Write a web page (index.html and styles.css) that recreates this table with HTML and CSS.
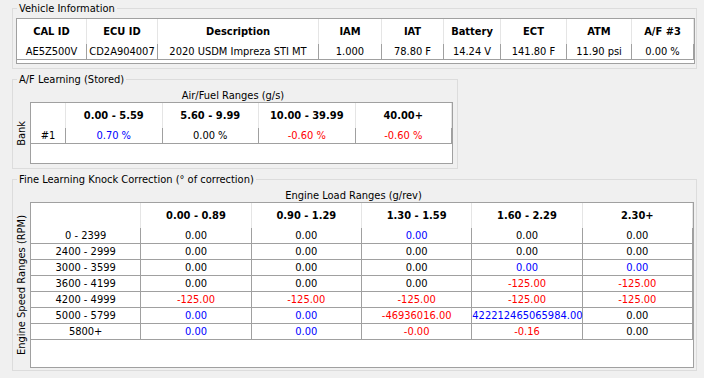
FILE: index.html
```html
<!DOCTYPE html>
<html lang="en">
<head>
    <meta charset="UTF-8">
    <title>ECU Learning Viewer</title>
    <link rel="stylesheet" href="styles.css">
</head>
<body>

<!-- Vehicle info -->
<fieldset class="group group-wide">
    <legend>Vehicle Information</legend>
    <div class="grid grid-vehicle">
        <table>
            <colgroup>
                <col class="w70"><col class="w71"><col class="w161"><col class="w63"><col class="w62">
                <col class="w57"><col class="w66"><col class="w65"><col class="w62">
            </colgroup>
            <thead>
                <tr>
                    <th>CAL ID</th><th>ECU ID</th><th>Description</th><th>IAM</th><th>IAT</th>
                    <th>Battery</th><th>ECT</th><th>ATM</th><th>A/F #3</th>
                </tr>
            </thead>
            <tbody>
                <tr>
                    <td>AE5Z500V</td><td>CD2A904007</td><td>2020 USDM Impreza STI MT</td><td>1.000</td><td>78.80 F</td>
                    <td>14.24 V</td><td>141.80 F</td><td>11.90 psi</td><td>0.00 %</td>
                </tr>
            </tbody>
        </table>
    </div>
</fieldset>

<!-- A/F learning -->
<fieldset class="group group-af">
    <legend>A/F Learning (Stored)</legend>
    <div class="axis-layout">
        <div class="axis-x">Air/Fuel Ranges (g/s)</div>
        <div class="axis-y"><span>Bank</span></div>
        <div class="grid grid-af">
            <table>
                <colgroup><col class="w35"><col><col><col><col></colgroup>
                <thead>
                    <tr><th></th><th>0.00 - 5.59</th><th>5.60 - 9.99</th><th>10.00 - 39.99</th><th>40.00+</th></tr>
                </thead>
                <tbody>
                    <tr><td>#1</td><td class="pos">0.70 %</td><td>0.00 %</td><td class="neg">-0.60 %</td><td class="neg">-0.60 %</td></tr>
                </tbody>
            </table>
        </div>
    </div>
</fieldset>

<!-- Fine learning knock correction -->
<fieldset class="group group-wide group-knock">
    <legend>Fine Learning Knock Correction (° of correction)</legend>
    <div class="axis-layout">
        <div class="axis-x">Engine Load Ranges (g/rev)</div>
        <div class="axis-y"><span>Engine Speed Ranges (RPM)</span></div>
        <div class="grid grid-knock">
            <table>
                <thead>
                    <tr><th></th><th>0.00 - 0.89</th><th>0.90 - 1.29</th><th>1.30 - 1.59</th><th>1.60 - 2.29</th><th>2.30+</th></tr>
                </thead>
                <tbody>
                    <tr><td>0 - 2399</td><td>0.00</td><td>0.00</td><td class="pos">0.00</td><td>0.00</td><td>0.00</td></tr>
                    <tr><td>2400 - 2999</td><td>0.00</td><td>0.00</td><td>0.00</td><td>0.00</td><td>0.00</td></tr>
                    <tr><td>3000 - 3599</td><td>0.00</td><td>0.00</td><td>0.00</td><td class="pos">0.00</td><td class="pos">0.00</td></tr>
                    <tr><td>3600 - 4199</td><td>0.00</td><td>0.00</td><td>0.00</td><td class="neg">-125.00</td><td class="neg">-125.00</td></tr>
                    <tr><td>4200 - 4999</td><td class="neg">-125.00</td><td class="neg">-125.00</td><td class="neg">-125.00</td><td class="neg">-125.00</td><td class="neg">-125.00</td></tr>
                    <tr><td>5000 - 5799</td><td class="pos">0.00</td><td class="pos">0.00</td><td class="neg">-46936016.00</td><td class="pos">422212465065984.00</td><td>0.00</td></tr>
                    <tr><td>5800+</td><td class="pos">0.00</td><td class="pos">0.00</td><td class="neg">-0.00</td><td class="neg">-0.16</td><td>0.00</td></tr>
                </tbody>
            </table>
        </div>
    </div>
</fieldset>

</body>
</html>
```

FILE: styles.css
```css
body {
    font-family: "DejaVu Sans Condensed", "Liberation Sans", sans-serif;
    font-size: 11px;
    background-color: #f0f0f0; /* window grey */
    color: #000;
    margin: 0;
    padding: 2px 0 0 12px;
}

/* Group boxes */
.group {
    border: 1px solid #dcdcdc;
    margin: 0 0 4px 0;
    padding: 0 0 4px 0;
    box-sizing: border-box;
    min-width: 0;
}

.group legend {
    line-height: 13px;
    padding: 0 2px;
    margin-left: 4px;
}

.group-wide {
    width: 685px;
}

.group-af {
    width: 446px;
}

.group-knock {
    padding-bottom: 2px;
}

/* Axis label layout */
.axis-layout {
    display: grid;
    grid-template-columns: 17px auto;
    justify-content: start;
}

.axis-x {
    grid-column: 1 / -1;
    text-align: center;
    line-height: 13px;
    margin-top: 3px;
}

.axis-y {
    grid-column: 1;
    grid-row: 2;
    display: flex;
    align-items: center;
    justify-content: center;
}

.axis-y span {
    writing-mode: vertical-rl;
    transform: rotate(180deg);
    line-height: 13px;
    white-space: nowrap;
}

/* Data grids */
.grid {
    background-color: #fff;
    border: 1px solid #a0a0a0;
    box-sizing: border-box;
}

.grid-vehicle {
    width: 679px;
    height: 46px;
    margin: 3px 0 0 3px;
}

.grid-af {
    grid-column: 2;
    grid-row: 2;
    width: 423px;
    height: 62px;
}

.grid-knock {
    grid-column: 2;
    grid-row: 2;
    width: 664px;
    height: 166px;
}

.grid table {
    border-collapse: separate;
    border-spacing: 0;
    table-layout: fixed;
    width: 100%;
}

.grid-vehicle table {
    width: 677px;
}

.grid th {
    font-weight: bold;
    line-height: 25px;
    padding: 0;
    text-align: center;
    border-right: 1px solid #e5e5e5;
    white-space: nowrap;
}

.grid td {
    line-height: 15px;
    padding: 0;
    text-align: center;
    border-right: 1px solid #a0a0a0;
    border-bottom: 1px solid #a0a0a0;
    white-space: nowrap;
}

.pos {
    color: #0000ff;
}

.neg {
    color: #ff0000;
}

/* column widths */
.w35 { width: 35px; }
.w57 { width: 57px; }
.w62 { width: 62px; }
.w63 { width: 63px; }
.w65 { width: 65px; }
.w66 { width: 66px; }
.w70 { width: 70px; }
.w71 { width: 71px; }
.w161 { width: 161px; }
```
